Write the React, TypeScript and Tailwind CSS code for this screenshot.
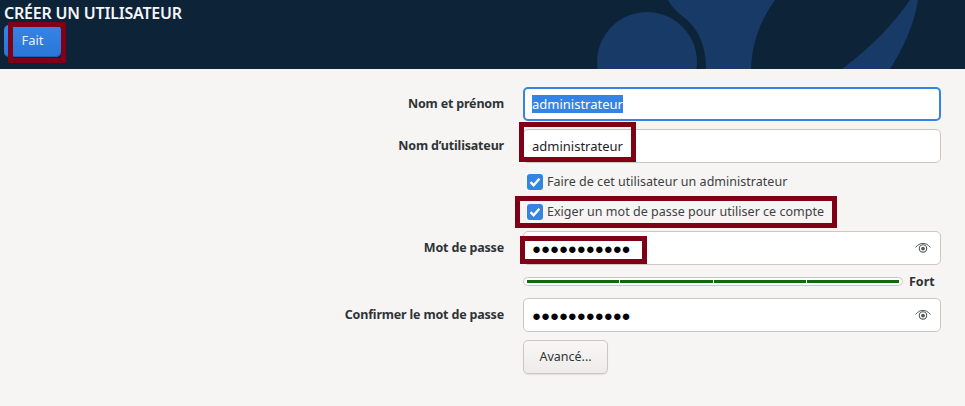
import type { ReactNode } from 'react';

const DOTS = '●●●●●●●●●●●';

function EyeIcon() {
  return (
    <svg width="16" height="16" viewBox="0 0 16 16" fill="none" className="shrink-0 -translate-x-px">
      <path d="M0.5 7.4C3 4.6 5.4 3.4 8 3.4s5 1.2 7.5 4" stroke="#555a5c" strokeWidth="1" />
      <circle cx="8" cy="8.4" r="3.7" stroke="#555a5c" strokeWidth="1.1" />
      <circle cx="8" cy="8.6" r="1.9" fill="#555a5c" />
    </svg>
  );
}

function Check() {
  return (
    <span className="flex h-4 w-4 shrink-0 items-center justify-center rounded-[3px] bg-[#3584e4]">
      <svg width="14" height="14" viewBox="0 0 14 14" fill="none">
        <path d="M2.5 7.2 5.6 10.2 11.4 3.8" stroke="white" strokeWidth="2.4" />
      </svg>
    </span>
  );
}

function Row({ label, children }: { label?: string; children: ReactNode }) {
  return (
    <div className="flex items-center">
      <div className="w-[504px] shrink-0 text-right text-[12.5px] font-bold tracking-[-0.18px] text-[#2e3436]">{label}</div>
      <div className="ml-[19px] w-[418px]">{children}</div>
    </div>
  );
}

function Field({ children, focused }: { children: ReactNode; focused?: boolean }) {
  return (
    <div
      className={
        focused
          ? 'flex h-[34px] items-center rounded-[5px] border-2 border-[#3584e4] bg-white pr-2 pl-[7px]'
          : 'flex h-[34px] items-center rounded-[5px] border border-[#cdc7c2] bg-white pr-2 pl-2'
      }
    >
      {children}
    </div>
  );
}

function Password() {
  return (
    <Field>
      <span className="flex-1 text-[15px] leading-none tracking-[-0.1px] text-black">{DOTS}</span>
      <EyeIcon />
    </Field>
  );
}

function CheckRow({ text }: { text: string }) {
  return (
    <Row>
      <div className="flex h-5 items-center gap-1 pl-[4px] text-[12.5px] text-[#3d4143]">
        <Check />
        <span className="pt-px tracking-[0.02px]">{text}</span>
      </div>
    </Row>
  );
}

function Marker({ className }: { className: string }) {
  return <div className={`pointer-events-none absolute border-[5px] border-[#800016] ${className}`} />;
}

export default function App() {
  return (
    <div className="relative h-[406px] w-[965px] overflow-hidden bg-[#f6f5f4] font-['Noto_Sans',sans-serif]">
      {/* Bandeau */}
      <header className="relative h-[69px] overflow-hidden bg-[#0c2338] pl-1">
        <svg width="965" height="69" viewBox="0 0 965 69" className="absolute top-0 left-0">
          <circle cx="647" cy="62" r="50" fill="#173a66" />
          <path d="M668 0H775C762 18 752 40 751 69H706C706 42 696 26 682 16C676 11 671 6 668 0Z" fill="#173a66" />
          <path d="M910 0H918C914 26 902 50 890 69H842C870 48 892 26 910 0Z" fill="#173a66" />
        </svg>
        <h1 className="relative pt-[2px] text-[16px] leading-[22px] font-semibold tracking-[-0.2px] text-[#f4f6f8]">
          CRÉER UN UTILISATEUR
        </h1>
        <button className="relative mt-px h-[32px] w-[57px] rounded-[5px] bg-gradient-to-b from-[#3584e4] to-[#2a76d8] text-[13px] text-[#e8f0fb] shadow-[inset_0_-1px_0_#1b5fb5]">
          Fait
        </button>
      </header>

      {/* Formulaire */}
      <main className="flex flex-col pt-[18px]">
        <Row label="Nom et prénom">
          <Field focused>
            <span className="bg-[#3584e4] text-[13px] leading-[18px] text-white">administrateur</span>
          </Field>
        </Row>
        <div className="mt-2">
          <Row label="Nom d’utilisateur">
            <Field>
              <span className="text-[13px] leading-[18px] text-[#1f2324]">administrateur</span>
            </Field>
          </Row>
        </div>
        <div className="mt-[9px]">
          <CheckRow text="Faire de cet utilisateur un administrateur" />
        </div>
        <div className="mt-[10px]">
          <CheckRow text="Exiger un mot de passe pour utiliser ce compte" />
        </div>
        <div className="mt-[9px]">
          <Row label="Mot de passe">
            <Password />
          </Row>
        </div>
        <div className="mt-3 flex items-center">
          <div className="ml-[523px] flex h-[9px] w-[380px] items-center gap-px rounded-full border border-[#cdc7c2] bg-white px-[3px]">
            <div className="h-[3px] flex-1 bg-[#0f6a0f]" />
            <div className="h-[3px] flex-1 bg-[#0f6a0f]" />
            <div className="h-[3px] flex-1 bg-[#0f6a0f]" />
            <div className="h-[3px] flex-1 bg-[#0f6a0f]" />
          </div>
          <span className="ml-[6px] text-[12.5px] leading-[9px] font-bold text-[#2e3436]">Fort</span>
        </div>
        <div className="mt-3">
          <Row label="Confirmer le mot de passe">
            <Password />
          </Row>
        </div>
        <div className="mt-2 ml-[523px]">
          <button className="h-[34px] w-[85px] rounded-[5px] border border-[#cdc7c2] bg-gradient-to-b from-[#f8f7f6] to-[#eeecea] text-[12.5px] text-[#2e3436] shadow-[0_1px_1px_rgba(0,0,0,0.08)]">
            Avancé...
          </button>
        </div>
      </main>

      {/* Annotations */}
      <Marker className="top-[22px] left-[8px] h-[41px] w-[58px]" />
      <Marker className="top-[122px] left-[519px] h-[40px] w-[117px]" />
      <Marker className="top-[196px] left-[515px] h-[32px] w-[322px]" />
      <Marker className="top-[236px] left-[520px] h-[28px] w-[127px]" />
    </div>
  );
}
